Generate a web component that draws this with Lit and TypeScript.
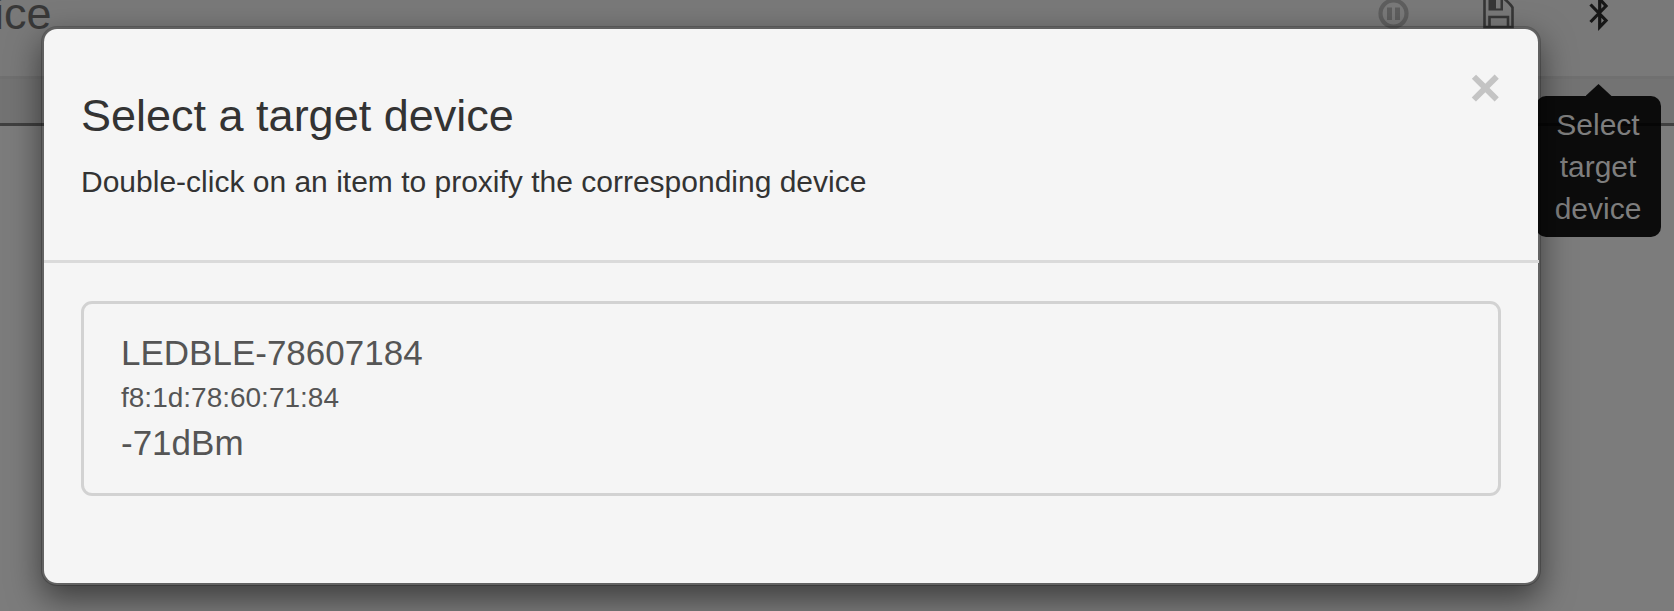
import { LitElement, html, css } from "lit";
import { customElement, property } from "lit/decorators.js";

@customElement("device-card")
class DeviceCard extends LitElement {
  @property() name = "";
  @property() address = "";
  @property() signal = "";

  static styles = css`
    :host { display: block; box-sizing: border-box; height: 195px; padding: 26px 37px; border: 3px solid #d2d2d2; border-radius: 11px; color: #555; }
    .big { font-size: 35px; line-height: 45px; }
    .mac { font-size: 28px; line-height: 45px; }
  `;

  render() {
    return html`<div class="big">${this.name}</div>
      <div class="mac">${this.address}</div>
      <div class="big">${this.signal}</div>`;
  }
}

@customElement("app-root")
class AppRoot extends LitElement {
  static styles = css`
    :host { display: block; position: relative; width: 1674px; height: 611px; overflow: hidden; background: #7c7c7c; font-family: "Liberation Sans", Arial, sans-serif; }
    .navbar { display: flex; box-sizing: border-box; height: 79px; border-bottom: 3px solid #707070; background: #797979; }
    .title { flex: 1; margin-left: -6px; margin-top: -12px; font-size: 45px; line-height: 52px; color: #383838; }
    .tools { display: flex; padding-right: 58px; }
    .tools svg { display: block; width: 34px; height: 34px; }
    .save { margin: 0 66px 0 72px; }
    .strip { height: 44px; border-bottom: 3px solid #404040; background: #737373; }
    .tooltip { position: absolute; left: 1536px; top: 84px; width: 125px; display: flex; flex-direction: column; align-items: center; }
    .arrow { width: 26px; height: 12px; background: rgba(0, 0, 0, 0.9); clip-path: polygon(50% 0, 100% 100%, 0 100%); }
    .tip { box-sizing: border-box; width: 125px; height: 141px; padding: 8px 15px 8px 14px; border-radius: 10px; background: rgba(0, 0, 0, 0.9); color: #7e7e7e; font-size: 30px; line-height: 42px; text-align: center; }
    .modal { position: absolute; left: 41px; top: 26px; width: 1494px; height: 554px; border: 3px solid rgba(0, 0, 0, 0.2); border-radius: 16px; background: #f5f5f5; background-clip: padding-box; box-shadow: 0 13px 32px rgba(0, 0, 0, 0.5); color: #333; }
    .head { display: flex; justify-content: space-between; box-sizing: border-box; height: 234px; margin-right: -1px; padding: 61px 38px 0 37px; border-bottom: 3px solid #dadada; }
    h4 { margin: 0; font-size: 45px; font-weight: 400; line-height: 52px; }
    p { margin: 19px 0 0; font-size: 30px; line-height: 42px; }
    .close { height: 56px; margin-top: -31px; font-size: 54px; line-height: 56px; font-weight: 700; color: #c4c4c4; }
    .body { padding: 38px 37px; }
  `;

  render() {
    return html`
      <div class="navbar">
        <div class="title">ice</div>
        <div class="tools">
          <svg viewBox="0 0 34 34"><circle cx="17.5" cy="13.500" r="13" fill="none" stroke="#5e5e5e" stroke-width="4.200" /><path d="M11 7.500h5v12.500h-5zM19 7.500h5v12.500h-5z" fill="#5e5e5e" /></svg>
          <svg class="save" viewBox="0 0 34 34"><path d="M2.500 -3V27H30.500V7.500Q28.500 4 22.500 -1M7.500 27V17H26V27" fill="none" stroke="#363636" stroke-width="2.600" /><path d="M6.500 -1h14.500v11.500h-14.500zM14 -1v9.500h4.500v-9.500z" fill="#363636" fill-rule="evenodd" /></svg>
          <svg viewBox="0 0 34 34"><path d="M8.500 4.500L24 20.500L17.700 27V-1L24 6L8.500 22" fill="none" stroke="#171717" stroke-width="3.200" /></svg>
        </div>
      </div>
      <div class="strip"></div>
      <div class="tooltip"><div class="arrow"></div><div class="tip">Select target device</div></div>
      <div class="modal">
        <div class="head">
          <div><h4>Select a target device</h4><p>Double-click on an item to proxify the corresponding device</p></div>
          <div class="close">×</div>
        </div>
        <div class="body"><device-card name="LEDBLE-78607184" address="f8:1d:78:60:71:84" signal="-71dBm"></device-card></div>
      </div>
    `;
  }
}
